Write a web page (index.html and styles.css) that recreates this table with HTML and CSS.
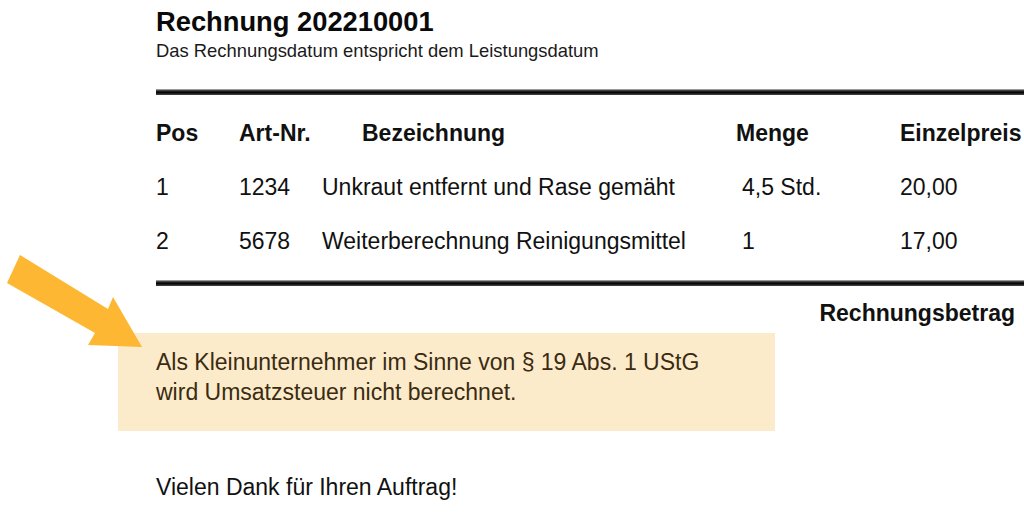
FILE: index.html
```html
<!DOCTYPE html>
<html lang="de">
<head>
<meta charset="utf-8">
<title>Rechnung 202210001</title>
<link rel="stylesheet" href="styles.css">
</head>
<body>
<div class="page">
  <h1 class="title">Rechnung 202210001</h1>
  <p class="subtitle">Das Rechnungsdatum entspricht dem Leistungsdatum</p>
  <div class="rule rule-top"></div>
  <div class="items">
    <div class="row head">
      <span>Pos</span>
      <span>Art-Nr.</span>
      <span class="desc-head">Bezeichnung</span>
      <span>Menge</span>
      <span>Einzelpreis</span>
    </div>
    <div class="row">
      <span>1</span>
      <span>1234</span>
      <span>Unkraut entfernt und Rase gemäht</span>
      <span class="qty">4,5 Std.</span>
      <span>20,00</span>
    </div>
    <div class="row">
      <span>2</span>
      <span>5678</span>
      <span>Weiterberechnung Reinigungsmittel</span>
      <span class="qty">1</span>
      <span>17,00</span>
    </div>
  </div>
  <div class="rule rule-bottom"></div>
  <div class="total-row">
    <span class="total-label">Rechnungsbetrag</span>
  </div>
  <div class="note">
    <p>Als Kleinunternehmer im Sinne von § 19 Abs. 1 UStG<br>wird Umsatzsteuer nicht berechnet.</p>
  </div>
  <p class="thanks">Vielen Dank für Ihren Auftrag!</p>
  <svg class="arrow" width="150" height="100" viewBox="0 250 150 100" aria-hidden="true">
    <polygon points="20,255 108,309 113,297 142,347 88,345 95,333 7,283" fill="#fdb733"/>
  </svg>
</div>
</body>
</html>
```
FILE: styles.css
```css
html, body {
  margin: 0;
  padding: 0;
  background: #ffffff;
}

body {
  font-family: "Liberation Sans", Arial, Helvetica, sans-serif;
  color: #111111;
  overflow: hidden;
}

.page {
  position: relative;
  width: 1024px;
  height: 531px;
  box-sizing: border-box;
  padding-left: 156px;
  overflow: hidden;
}

.title {
  margin: 6px 0 0;
  font-size: 27.3px;
  line-height: 32px;
  font-weight: bold;
  color: #0a0a0a;
}

.subtitle {
  margin: 2px 0 0;
  font-size: 18.4px;
  line-height: 22px;
  color: #1a1a1a;
}

.rule {
  height: 6px;
  background: linear-gradient(#c4c4c4 0%, #2a2a2a 30%, #050505 60%, #4a4a4a 100%);
}

.rule-top {
  margin-top: 27px;
}

.items {
  margin-top: 11px;
}

.row {
  display: grid;
  grid-template-columns: 83px 83px 414px 164px auto;
  font-size: 23px;
  line-height: 54px;
  white-space: nowrap;
}

.row.head {
  font-weight: bold;
}

.desc-head {
  padding-left: 40px;
}

.qty {
  padding-left: 6px;
}

.rule-bottom {
  margin-top: 12px;
}

.total-row {
  display: flex;
  justify-content: flex-end;
  margin-top: 12px;
  padding-right: 9px;
}

.total-label {
  font-size: 23px;
  line-height: 30px;
  font-weight: bold;
}

.note {
  margin: 5px 0 0 -38px;
  width: 657px;
  height: 98px;
  box-sizing: border-box;
  padding: 14px 0 0 38px;
  background: #fcebcb;
}

.note p {
  margin: 0;
  font-size: 23px;
  line-height: 30px;
  color: #3a2b12;
}

.thanks {
  margin: 41px 0 0;
  font-size: 23px;
  line-height: 30px;
}

.arrow {
  position: absolute;
  left: 0;
  top: 250px;
}
```
